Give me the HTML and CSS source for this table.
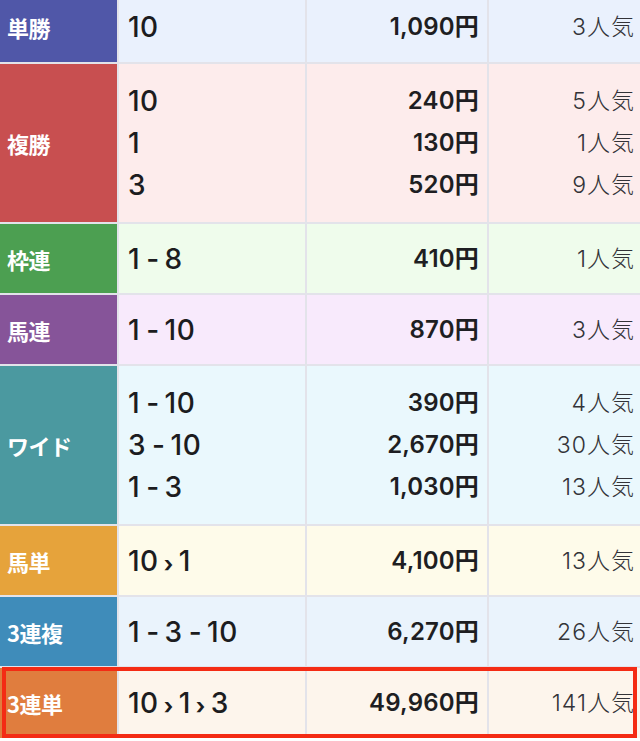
FILE: index.html
```html
<!DOCTYPE html>
<html lang="ja">
<head>
<meta charset="utf-8">
<link rel="stylesheet" href="styles.css">
</head>
<body>
<div class="table">
  <div class="row tansho">
    <div class="label">単勝</div>
    <div class="cell horse"><div class="line">10</div></div>
    <div class="cell pay"><div class="line">1,090円</div></div>
    <div class="cell pop"><div class="line">3人気</div></div>
  </div>
  <div class="row fukusho multi">
    <div class="label">複勝</div>
    <div class="cell horse"><div class="line">10</div><div class="line">1</div><div class="line">3</div></div>
    <div class="cell pay"><div class="line">240円</div><div class="line">130円</div><div class="line">520円</div></div>
    <div class="cell pop"><div class="line">5人気</div><div class="line">1人気</div><div class="line">9人気</div></div>
  </div>
  <div class="row wakuren">
    <div class="label">枠連</div>
    <div class="cell horse"><div class="line">1<span class="sep">-</span>8</div></div>
    <div class="cell pay"><div class="line">410円</div></div>
    <div class="cell pop"><div class="line">1人気</div></div>
  </div>
  <div class="row umaren">
    <div class="label">馬連</div>
    <div class="cell horse"><div class="line">1<span class="sep">-</span>10</div></div>
    <div class="cell pay"><div class="line">870円</div></div>
    <div class="cell pop"><div class="line">3人気</div></div>
  </div>
  <div class="row wide multi">
    <div class="label">ワイド</div>
    <div class="cell horse"><div class="line">1<span class="sep">-</span>10</div><div class="line">3<span class="sep">-</span>10</div><div class="line">1<span class="sep">-</span>3</div></div>
    <div class="cell pay"><div class="line">390円</div><div class="line">2,670円</div><div class="line">1,030円</div></div>
    <div class="cell pop"><div class="line">4人気</div><div class="line">30人気</div><div class="line">13人気</div></div>
  </div>
  <div class="row umatan">
    <div class="label">馬単</div>
    <div class="cell horse"><div class="line">10<span class="arrow">›</span>1</div></div>
    <div class="cell pay"><div class="line">4,100円</div></div>
    <div class="cell pop"><div class="line">13人気</div></div>
  </div>
  <div class="row sanfuku">
    <div class="label">3連複</div>
    <div class="cell horse"><div class="line">1<span class="sep">-</span>3<span class="sep">-</span>10</div></div>
    <div class="cell pay"><div class="line">6,270円</div></div>
    <div class="cell pop"><div class="line">26人気</div></div>
  </div>
  <div class="row santan highlight">
    <div class="label">3連単</div>
    <div class="cell horse"><div class="line">10<span class="arrow">›</span>1<span class="arrow">›</span>3</div></div>
    <div class="cell pay"><div class="line">49,960円</div></div>
    <div class="cell pop"><div class="line">141人気</div></div>
  </div>
</div>
</body>
</html>
```

FILE: styles.css
```css
html, body {
  margin: 0;
  padding: 0;
  background: #ffffff;
}

body {
  width: 640px;
  height: 741px;
  overflow: hidden;
  font-family: "Inter", "Noto Sans CJK JP", sans-serif;
  color: #1f1f24;
}

.table {
  margin-top: -8px;
  display: flex;
  flex-direction: column;
  gap: 2px;
  background: #e3e3ea;
  width: 641px;
}

.row {
  display: grid;
  grid-template-columns: 117px 186px 180px 1fr;
  column-gap: 2px;
  height: 69px;
  position: relative;
}

.row.tansho { height: 70px; }
.row.multi { height: 158px; }
.row.santan { height: 70px; }

.label {
  display: flex;
  align-items: center;
  padding-left: 7px;
  color: #ffffff;
  font-family: "Noto Sans CJK JP", sans-serif;
  font-weight: 700;
  font-size: 22px;
  letter-spacing: -0.5px;
}

.cell {
  display: flex;
  flex-direction: column;
  justify-content: center;
}

.line {
  height: 42px;
  line-height: 42px;
  white-space: nowrap;
}

.horse {
  padding-left: 9px;
  font-size: 28px;
  font-weight: 500;
  color: #1c1c20;
  letter-spacing: 0.5px;
}

.sep {
  margin: 0 5px 0 6px;
}

.arrow {
  display: inline-block;
  margin: 0 5px 0 5px;
  font-weight: 700;
  font-size: 22px;
  position: relative;
  top: 1px;
}

.pay {
  align-items: flex-end;
  padding-right: 8px;
  font-size: 24px;
  font-weight: 600;
  color: #1e1e22;
}

.pay .line {
  letter-spacing: 0.2px;
}

.pop {
  align-items: flex-end;
  padding-right: 7px;
  font-size: 23px;
  font-weight: 300;
  color: #333338;
  letter-spacing: 1px;
}

.pop .line {
  margin-right: -1px;
}

.tansho .label { background: #5057a8; }
.tansho .cell { background: #eaf1fd; }

.fukusho .label { background: #c84f50; }
.fukusho .cell { background: #fdecec; }

.wakuren .label { background: #4c9f51; }
.wakuren .cell { background: #effcec; }

.umaren .label { background: #865499; }
.umaren .cell { background: #f8eafc; }

.wide .label { background: #4b99a0; }
.wide .cell { background: #eaf8fd; }

.umatan .label { background: #e6a33b; }
.umatan .cell { background: #fefbea; }

.sanfuku .label { background: #3f8cba; }
.sanfuku .cell { background: #eaf3fc; }

.santan .label { background: #e07d3e; }
.santan .cell { background: #fdf5ec; }

.highlight::after {
  content: "";
  position: absolute;
  top: -1px;
  left: 2px;
  right: 4px;
  bottom: 0;
  border: 4px solid #f42b14;
  pointer-events: none;
}
```
